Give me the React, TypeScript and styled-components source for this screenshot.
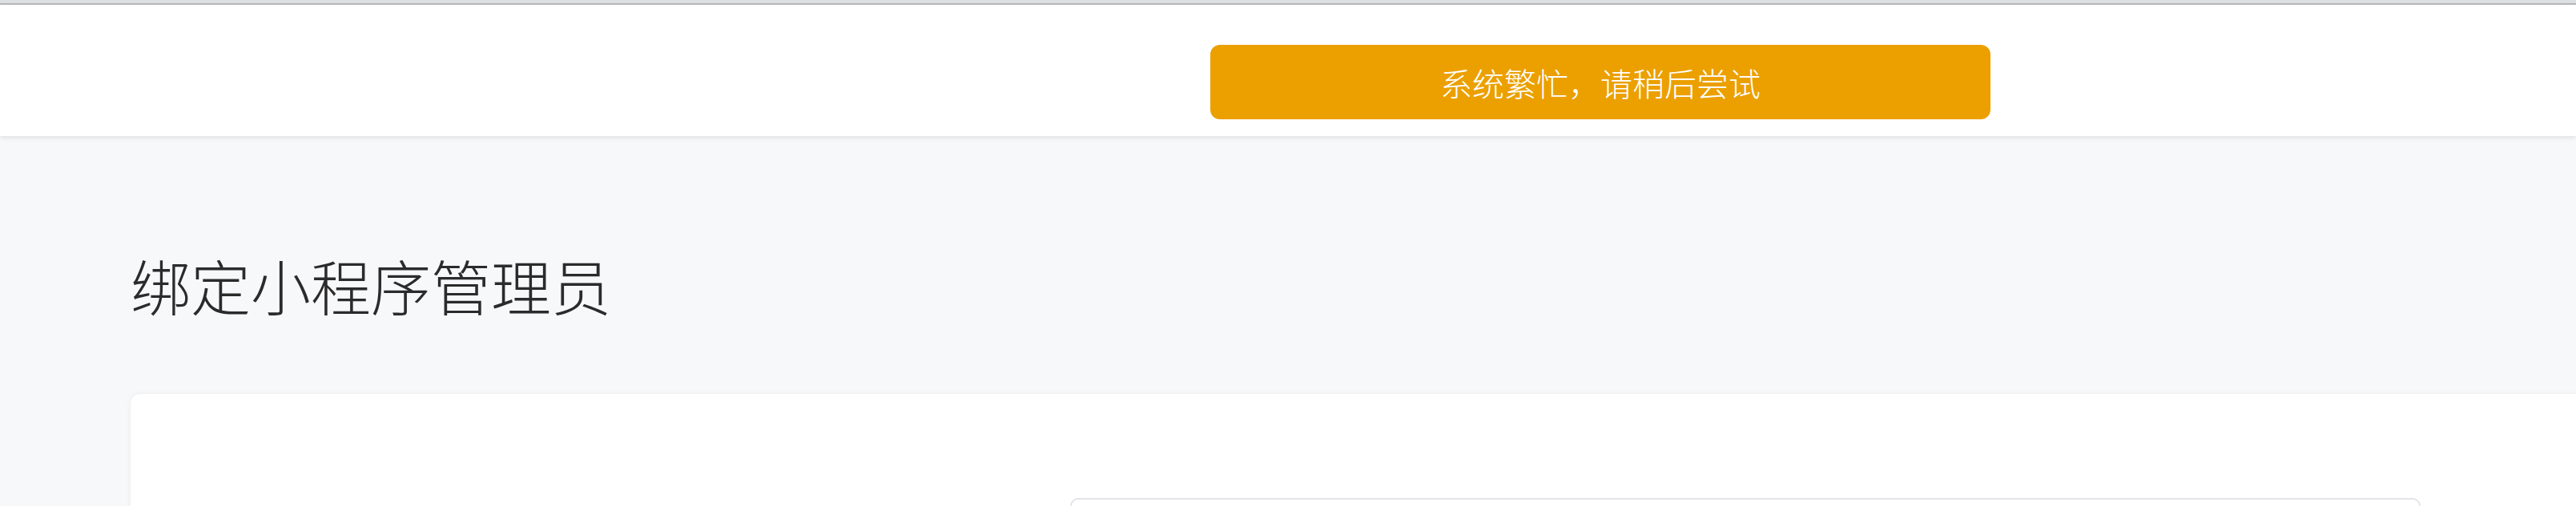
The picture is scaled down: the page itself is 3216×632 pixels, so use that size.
import styled, { createGlobalStyle } from "styled-components";

const GlobalStyle = createGlobalStyle`
  html, body {
    margin: 0;
    padding: 0;
    background: #f7f8fa;
    font-family: "Noto Sans CJK SC", "Noto Sans", sans-serif;
    overflow: hidden;
  }
`;

export default function App() {
  return (
    <>
      <GlobalStyle />
      <Page>
        <BrowserStrip />
        <Header>
          <Toast>系统繁忙，请稍后尝试</Toast>
        </Header>
        <Main>
          <Title>绑定小程序管理员</Title>
          <Card>
            <FieldBox />
          </Card>
        </Main>
      </Page>
    </>
  );
}

const Page = styled.div`
  width: 3216px;
  height: 632px;
  overflow: hidden;
  display: flex;
  flex-direction: column;
`;

const BrowserStrip = styled.div`
  height: 4px;
  background: #dedfe1;
  border-bottom: 2px solid #b9babc;
  flex-shrink: 0;
`;

const Header = styled.header`
  position: relative;
  height: 164px;
  flex-shrink: 0;
  background: #ffffff;
  box-shadow: 0 2px 6px rgba(0, 0, 0, 0.1);
  z-index: 1;
`;

const Toast = styled.div`
  position: absolute;
  left: 1511px;
  top: 50px;
  width: 974px;
  height: 93px;
  border-radius: 12px;
  background: #eba000;
  color: #ffffff;
  font-size: 40px;
  font-weight: 300;
  display: flex;
  align-items: center;
  justify-content: center;
`;

const Main = styled.main`
  flex: 1;
  display: flex;
  flex-direction: column;
  padding: 0 0 0 163px;
`;

const Title = styled.h1`
  margin: 148px 0 0;
  font-size: 75px;
  line-height: 76px;
  font-weight: 300;
  color: #2b2b2b;
`;

const Card = styled.section`
  margin-top: 98px;
  flex: 1;
  background: #ffffff;
  border-radius: 12px 0 0 0;
  box-shadow: 0 0 6px rgba(0, 0, 0, 0.06);
  padding: 130px 0 0 1173px;
`;

const FieldBox = styled.div`
  width: 1686px;
  height: 60px;
  border: 2px solid #e3e4e8;
  border-radius: 10px;
  box-sizing: border-box;
`;
